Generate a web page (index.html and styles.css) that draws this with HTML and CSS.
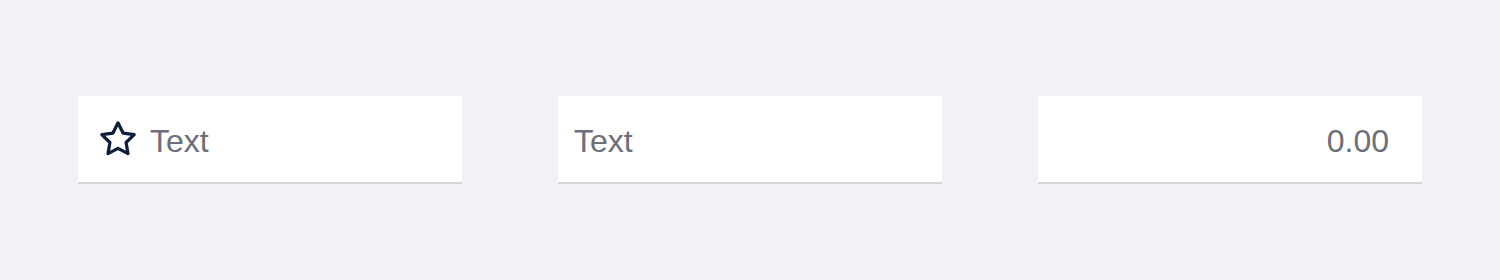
FILE: index.html
```html
<!DOCTYPE html>
<html lang="en">
<head>
<meta charset="utf-8">
<title>Fields</title>
<link rel="stylesheet" href="styles.css">
</head>
<body>
  <div class="row">
    <div class="field field--icon">
      <svg class="field__icon" viewBox="0 0 24 24" width="40" height="40" aria-hidden="true">
        <polygon points="12 2.3 15.02 8.42 21.7 9.4 16.85 14.12 18 20.75 12 17.6 6 20.75 7.15 14.12 2.3 9.4 8.98 8.42" fill="none" stroke="#0d1e3d" stroke-width="1.95" stroke-linejoin="round"/>
      </svg>
      <span class="field__text">Text</span>
    </div>
    <div class="field">
      <span class="field__text">Text</span>
    </div>
    <div class="field field--number">
      <span class="field__text">0.00</span>
    </div>
  </div>
</body>
</html>
```

FILE: styles.css
```css
html, body {
  margin: 0;
  padding: 0;
}
body {
  background: #f1f2f6;
  font-family: "Liberation Sans", Arial, Helvetica, sans-serif;
  width: 1500px;
  height: 280px;
}
.row {
  display: flex;
  gap: 96px;
  padding: 96px 78px 0 78px;
}
.field {
  box-sizing: border-box;
  width: 384px;
  height: 88px;
  background: #ffffff;
  border-bottom: 2px solid #d5d6da;
  display: flex;
  align-items: center;
  padding: 4px 16px 0 16px;
}
.field--icon {
  padding-left: 20px;
  gap: 12px;
}
.field__icon {
  flex: none;
  display: block;
  margin-top: -4px;
}
.field--number {
  justify-content: flex-end;
  padding-right: 33px;
}
.field__text {
  font-size: 32px;
  color: #6c6f7a;
  line-height: 1;
}
```
